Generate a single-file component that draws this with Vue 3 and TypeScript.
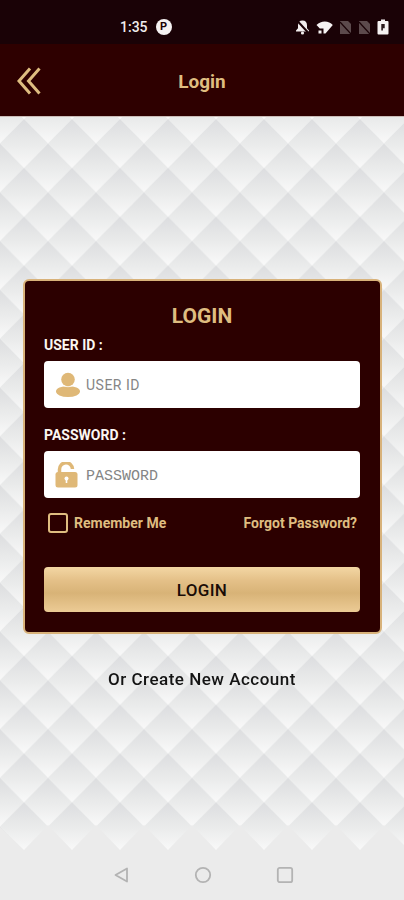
<script setup lang="ts">
import { ref } from 'vue'

const userId = ref('')
const password = ref('')
const remember = ref(false)
</script>

<template>
  <div class="page">
    <div class="status-bar">
      <div class="status-center">
        <span class="time">1:35</span>
        <span class="p-badge">P</span>
      </div>
      <div class="status-icons">
        <svg width="15" height="16" viewBox="0 0 15 16">
          <path d="M7.500 1.500c-2.900 0-4.500 2-4.500 4.700v3l-2 2.300v1h13v-1l-2-2.300v-3c0-2.700-1.600-4.700-4.500-4.700z" fill="#f2eeee" />
          <circle cx="7.500" cy="14" r="1.600" fill="#f2eeee" />
          <path d="M1.500 1l12 13" stroke="#1a0206" stroke-width="2" />
        </svg>
        <svg width="17" height="15" viewBox="0 0 17 15">
          <path d="M0.500 5C2.800 2.800 5.600 1.500 8.800 1.500s6 1.300 8 3.500L9.500 13.500H7.500V8.500H3.800z" fill="#f6f2f2" />
          <rect x="2.500" y="10.500" width="3" height="3" fill="#f6f2f2" />
        </svg>
        <svg width="13" height="15" viewBox="0 0 13 15">
          <path d="M1 1h8l3 3v10H1z" fill="#5c4a4c" />
          <path d="M1 2l11 12" stroke="#1a0206" stroke-width="1.200" />
        </svg>
        <svg width="13" height="15" viewBox="0 0 13 15">
          <path d="M1 1h8l3 3v10H1z" fill="#5c4a4c" />
          <path d="M1 2l11 12" stroke="#1a0206" stroke-width="1.200" />
        </svg>
        <svg width="12" height="16" viewBox="0 0 12 16">
          <path d="M4 0.500h4v1.500h2.500a1 1 0 0 1 1 1v11.500a1 1 0 0 1-1 1h-9a1 1 0 0 1-1-1V3a1 1 0 0 1 1-1H4z" fill="#f6f2f2" />
          <path d="M4.300 5h3.400v4.200H5.900V11.500H4.300z" fill="#2a1a1c" />
        </svg>
      </div>
    </div>

    <header class="app-bar">
      <button class="back" type="button" aria-label="Back">
        <svg width="26" height="30" viewBox="0 0 26 30">
          <path d="M14 2.500L3 15l11 12.500M23.500 2.500L12.500 15l11 12.500" fill="none" stroke="#dfbd80" stroke-width="3" />
        </svg>
      </button>
      <h1 class="app-title">Login</h1>
    </header>

    <main class="content">
      <svg class="quilt" width="404" height="733" aria-hidden="true">
        <defs>
          <linearGradient id="tile" x1="0" y1="0" x2="0" y2="1">
            <stop offset="0" stop-color="#dcdddf" />
            <stop offset="0.55" stop-color="#ebecec" />
            <stop offset="1" stop-color="#f9f9f9" />
          </linearGradient>
          <linearGradient id="tileHigh" gradientUnits="userSpaceOnUse" x1="0" y1="-24.400" x2="0" y2="24.400">
            <stop offset="0" stop-color="#dcdddf" />
            <stop offset="0.55" stop-color="#ebecec" />
            <stop offset="1" stop-color="#f9f9f9" />
          </linearGradient>
          <linearGradient id="tileLow" gradientUnits="userSpaceOnUse" x1="0" y1="24.400" x2="0" y2="73.200">
            <stop offset="0" stop-color="#dcdddf" />
            <stop offset="0.55" stop-color="#ebecec" />
            <stop offset="1" stop-color="#f9f9f9" />
          </linearGradient>
          <pattern id="quilt" width="48" height="48.800" patternUnits="userSpaceOnUse" x="0" y="2">
            <rect width="48" height="48.800" fill="#f3f4f4" />
            <path d="M0 24.400L24 48.800H0z M48 24.400L24 48.800H48z" fill="url(#tileLow)" />
            <path d="M0 -24.400L24 0L0 24.400L-24 0z M48 -24.400L72 0L48 24.400L24 0z" fill="url(#tileHigh)" />
            <path d="M24 0L48 24.400L24 48.800L0 24.400z" fill="url(#tile)" />
          </pattern>
        </defs>
        <rect width="404" height="733" fill="url(#quilt)" />
        <path
          d="M0 733V710L24 733L48 708L72 733L96 708L120 733L144 708L168 733L192 708L216 733L240 708L264 733L288 708L312 733L336 708L360 733L384 708L404 728V733z"
          fill="#ebebeb"
        />
      </svg>

      <form class="card" @submit.prevent>
        <h2 class="card-title">LOGIN</h2>

        <label class="field-label" for="user-id">USER ID :</label>
        <div class="input-box">
          <svg class="input-icon" width="26" height="26" viewBox="0 0 26 26">
            <circle cx="13" cy="7.500" r="6.800" fill="#dfb877" />
            <ellipse cx="13" cy="19.500" rx="12" ry="5.500" fill="#dfb877" />
            <path d="M8 13.500c1.500 1.600 8.500 1.600 10 0" stroke="#fff" stroke-width="0.800" fill="none" />
          </svg>
          <input id="user-id" v-model="userId" placeholder="USER ID">
        </div>

        <label class="field-label" for="password">PASSWORD :</label>
        <div class="input-box">
          <svg class="input-icon" width="26" height="26" viewBox="0 0 26 26">
            <path d="M4.500 11V7.500a6.500 6.500 0 0 1 13-0.500" fill="none" stroke="#dfb877" stroke-width="3.500" />
            <rect x="0.500" y="10" width="22" height="15.500" rx="2.500" fill="#dfb877" />
            <circle cx="11.500" cy="16.500" r="2" fill="#fff" />
            <rect x="10.700" y="17" width="1.600" height="4" fill="#fff" />
          </svg>
          <input id="password" v-model="password" class="mono" type="password" placeholder="PASSWORD">
        </div>

        <div class="options">
          <label class="remember">
            <input v-model="remember" class="check" type="checkbox">
            <span>Remember Me</span>
          </label>
          <a class="forgot" href="#">Forgot Password?</a>
        </div>

        <button class="submit" type="submit">LOGIN</button>
      </form>

      <a class="create" href="#">Or Create New Account</a>
    </main>

    <nav class="nav-bar">
      <svg width="18" height="18" viewBox="0 0 18 18">
        <path d="M15 2.500V15.500L3.500 9z" fill="none" stroke="#b3b3b3" stroke-width="1.800" stroke-linejoin="round" />
      </svg>
      <svg width="18" height="18" viewBox="0 0 18 18">
        <circle cx="9" cy="9" r="7.200" fill="none" stroke="#b3b3b3" stroke-width="1.800" />
      </svg>
      <svg width="18" height="18" viewBox="0 0 18 18">
        <rect x="1.800" y="1.800" width="14.400" height="14.400" rx="2" fill="none" stroke="#b3b3b3" stroke-width="1.800" />
      </svg>
    </nav>
  </div>
</template>

<style>
html,
body {
  margin: 0;
  background: #ebebeb;
}
</style>

<style scoped>
.page {
  width: 404px;
  height: 900px;
  display: flex;
  flex-direction: column;
  overflow: hidden;
  font-family: Roboto, "Liberation Sans", sans-serif;
  filter: blur(0.45px);
}

.status-bar {
  height: 44px;
  flex: none;
  box-sizing: border-box;
  padding: 10px 15px 0 120px;
  display: flex;
  align-items: center;
  justify-content: space-between;
  background: #1a0206;
}

.status-center {
  display: flex;
  align-items: center;
  gap: 8px;
}

.time {
  color: #f0eded;
  font-size: 14px;
  font-weight: 500;
}

.p-badge {
  width: 16px;
  height: 16px;
  border-radius: 50%;
  background: #f6f2f2;
  color: #1a0206;
  font-size: 11px;
  font-weight: 700;
  line-height: 16px;
  text-align: center;
}

.status-icons {
  display: flex;
  align-items: center;
  gap: 6px;
}

.app-bar {
  height: 73px;
  flex: none;
  box-sizing: border-box;
  padding-top: 3px;
  position: relative;
  display: flex;
  align-items: center;
  justify-content: center;
  background: #2e0000;
  border-bottom: 1px solid #cbbdb9;
}

.back {
  position: absolute;
  left: 16px;
  top: 22px;
  padding: 0;
  border: 0;
  background: none;
  line-height: 0;
}

.app-title {
  margin: 0;
  color: #dfbd80;
  font-size: 19px;
  font-weight: 700;
}

.content {
  flex: 1;
  position: relative;
  display: flex;
  flex-direction: column;
  align-items: center;
  padding-top: 162px;
  box-sizing: border-box;
}

.quilt {
  position: absolute;
  left: 0;
  top: 0;
}

.card {
  position: relative;
  width: 359px;
  height: 355px;
  margin-left: 1px;
  box-sizing: border-box;
  padding: 0 20px 0 19px;
  display: flex;
  flex-direction: column;
  background: #2c0000;
  border: 2px solid #d8b27a;
  border-radius: 6px;
}

.card-title {
  margin: 21px 0 0;
  height: 28px;
  line-height: 28px;
  text-align: center;
  color: #dfbd80;
  font-size: 21px;
  font-weight: 700;
}

.field-label {
  margin-top: 6px;
  height: 19px;
  line-height: 19px;
  color: #fbf7f2;
  font-size: 14px;
  font-weight: 700;
}

.input-box + .field-label {
  margin-top: 18px;
}

.input-box {
  margin-top: 6px;
  height: 47px;
  display: flex;
  align-items: center;
  background: #fff;
  border-radius: 4px;
}

.input-icon {
  flex: none;
  margin-left: 11px;
}

.input-box input {
  flex: 1;
  min-width: 0;
  height: 100%;
  margin-left: 5px;
  padding: 0;
  border: 0;
  outline: 0;
  background: none;
  color: #333;
  font-family: Roboto, "Liberation Sans", sans-serif;
  font-size: 14px;
  letter-spacing: 0.5px;
}

.input-box input::placeholder {
  color: #858585;
  opacity: 1;
}

.input-box input.mono {
  box-sizing: border-box;
  padding-top: 3px;
  font-family: "Liberation Mono", monospace;
  font-size: 15px;
  letter-spacing: 0;
}

.options {
  margin-top: 15px;
  height: 20px;
  display: flex;
  align-items: center;
  justify-content: space-between;
  padding: 0 3px 0 4px;
  color: #dfbd80;
  font-size: 14px;
  font-weight: 700;
}

.remember {
  display: flex;
  align-items: center;
  gap: 6px;
}

.check {
  appearance: none;
  width: 20px;
  height: 20px;
  margin: 0;
  box-sizing: border-box;
  border: 2px solid #dfbd80;
  border-radius: 3px;
  background: none;
}

.forgot {
  color: #dfbd80;
  text-decoration: none;
}

.submit {
  margin-top: 34px;
  height: 45px;
  padding: 0;
  border: 0;
  border-radius: 4px;
  background: linear-gradient(180deg, #f3d7a4 0%, #e4c088 30%, #d8b377 58%, #eccb95 100%);
  color: #1a0c06;
  font-family: Roboto, "Liberation Sans", sans-serif;
  font-size: 17px;
  font-weight: 500;
  letter-spacing: 0.3px;
}

.create {
  position: relative;
  margin-top: 35px;
  color: #141414;
  font-size: 17px;
  font-weight: 500;
  letter-spacing: 0.5px;
  text-decoration: none;
}

.nav-bar {
  height: 50px;
  flex: none;
  display: flex;
  align-items: center;
  justify-content: center;
  gap: 64px;
  background: #ebebeb;
  padding-left: 2px;
  box-sizing: border-box;
}
</style>
